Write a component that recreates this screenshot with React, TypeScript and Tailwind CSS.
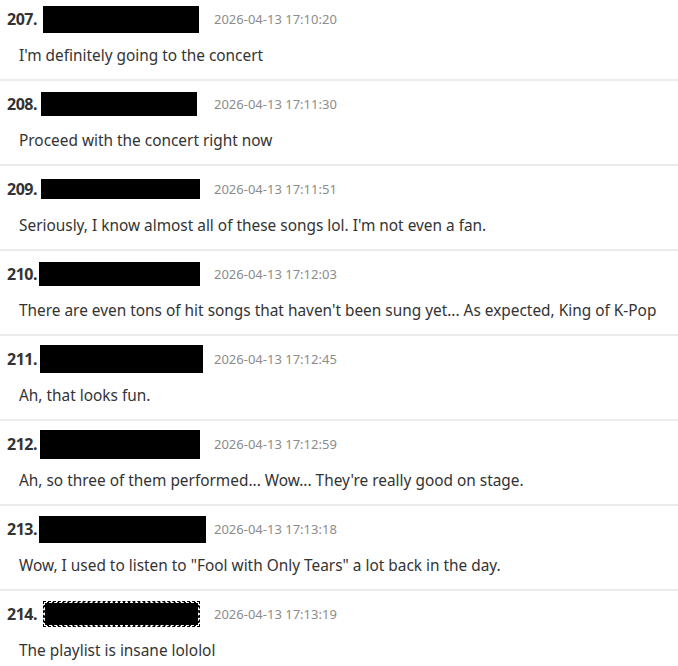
import React from 'react';

type Comment = {
  no: number;
  date: string;
  text: string;
  // redaction box: left offset from number, width, height
  boxMl: string;
  boxW: string;
  boxH: string;
  dashed?: boolean;
};

const comments: Comment[] = [
  { no: 207, date: '2026-04-13 17:10:20', text: "I'm definitely going to the concert", boxMl: 'ml-[5px]', boxW: 'w-[156px]', boxH: 'h-[27px]' },
  { no: 208, date: '2026-04-13 17:11:30', text: 'Proceed with the concert right now', boxMl: 'ml-[3px]', boxW: 'w-[156px]', boxH: 'h-[24px]' },
  { no: 209, date: '2026-04-13 17:11:51', text: "Seriously, I know almost all of these songs lol. I'm not even a fan.", boxMl: 'ml-[3px]', boxW: 'w-[159px]', boxH: 'h-[20px]' },
  { no: 210, date: '2026-04-13 17:12:03', text: "There are even tons of hit songs that haven't been sung yet... As expected, King of K-Pop", boxMl: 'ml-[1px]', boxW: 'w-[161px]', boxH: 'h-[24px]' },
  { no: 211, date: '2026-04-13 17:12:45', text: 'Ah, that looks fun.', boxMl: 'ml-[2px]', boxW: 'w-[163px]', boxH: 'h-[28px]' },
  { no: 212, date: '2026-04-13 17:12:59', text: "Ah, so three of them performed... Wow... They're really good on stage.", boxMl: 'ml-[2px]', boxW: 'w-[160px]', boxH: 'h-[29px]' },
  { no: 213, date: '2026-04-13 17:13:18', text: 'Wow, I used to listen to "Fool with Only Tears" a lot back in the day.', boxMl: 'ml-[1px]', boxW: 'w-[167px]', boxH: 'h-[27px]' },
  { no: 214, date: '2026-04-13 17:13:19', text: 'The playlist is insane lololol', boxMl: 'ml-[6px]', boxW: 'w-[155px]', boxH: 'h-[24px]', dashed: true },
];

const CommentRow: React.FC<{ c: Comment }> = ({ c }) => (
  <div className="border-b-2 border-[#ebebeb] pt-[9px] pb-[12px]">
    <div className="flex h-[28px] items-center">
      <div className="flex w-[214px] shrink-0 items-center pl-[7px]">
        <span className="w-[31px] shrink-0 text-[16px] font-bold leading-none tracking-[-0.5px] text-[#333]">{c.no}.</span>
        <span
          className={`${c.boxMl} ${c.boxW} ${c.boxH} shrink-0 bg-black ${c.dashed ? 'border border-dashed border-white outline outline-1 outline-dashed outline-black' : ''}`}
        />
      </div>
      <span className="text-[13px] leading-none text-[#8c8c8c]">{c.date}</span>
    </div>
    <p className="mt-[12px] pl-[19px] text-[15.4px] leading-[22px] text-[#333] whitespace-nowrap">{c.text}</p>
  </div>
);

export default function App() {
  return (
    <div className="h-[666px] w-[678px] overflow-hidden bg-white" style={{ fontFamily: "'Noto Sans', 'Noto Sans CJK KR', sans-serif" }}>
      <div className="-mt-[4px]">
        {comments.map((c) => (
          <CommentRow key={c.no} c={c} />
        ))}
      </div>
    </div>
  );
}
